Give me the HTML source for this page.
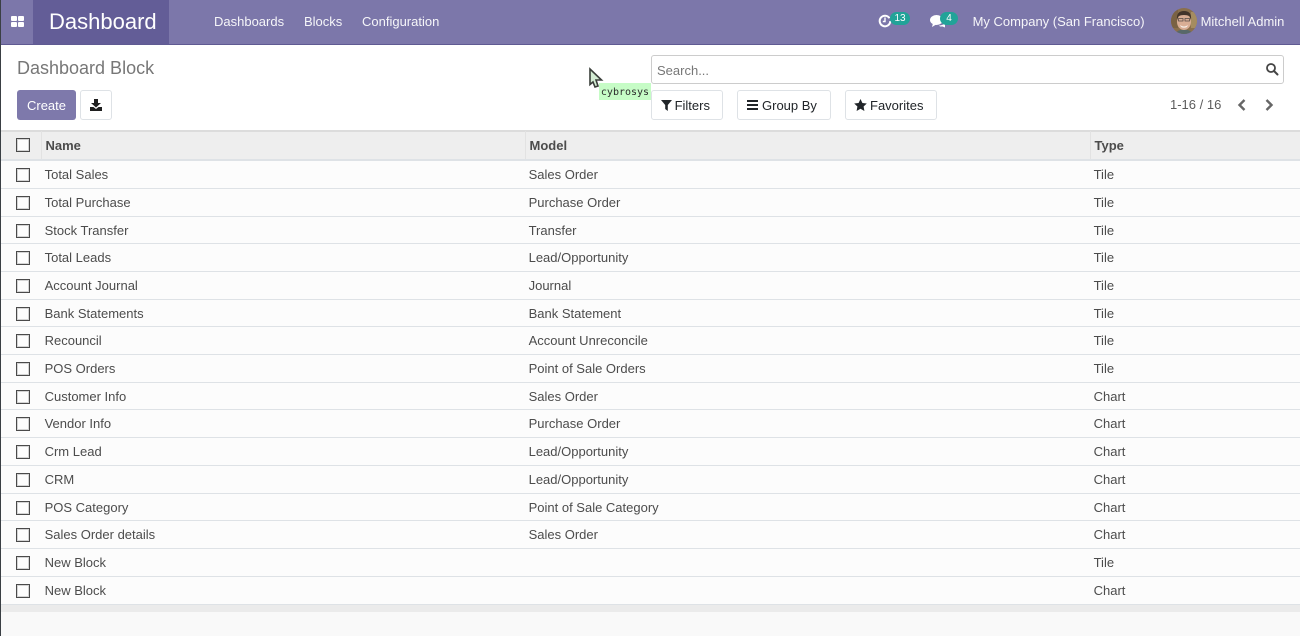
<!DOCTYPE html>
<html><head><meta charset="utf-8">
<style>
*{box-sizing:border-box}
html,body{margin:0;padding:0}
body{width:1300px;height:636px;overflow:hidden;position:relative;background:#f9f9f9;font-family:"Liberation Sans",sans-serif;font-size:13px;color:#4c4c4c}
.a{position:absolute;white-space:nowrap}
#nav{left:0;top:0;width:1300px;height:45px;background:#7c77aa;border-bottom:1px solid #5f5a92}
#brand{left:33px;top:0;width:136px;height:44px;background:#635d97}
.n{color:#fff;top:14px;line-height:15px;opacity:.93}
.btn{height:30px;top:90px;background:#fff;border:1px solid #dee2e6;border-radius:3px;color:#212529;line-height:29px}
.badge{background:#21a398;color:#fff;font-size:10px;text-align:center;border-radius:8px;height:13px;line-height:13px}
.cb{position:absolute;left:16px;width:14px;height:14px;border:1px solid #4a4a4a;background:#fdfdfd;box-shadow:inset 0 0 0 1px #d4d4d4}
.r{position:absolute;left:1px;width:1299px;height:27.7px;background:#fcfcfc;border-bottom:1px solid #dee2e6}
.r span{position:absolute;top:6px;line-height:15px}
.r span:nth-of-type(1){left:43.6px}.r span:nth-of-type(2){left:527.6px}.r span:nth-of-type(3){left:1092.6px}
.r .cb{left:15px;top:7px}
.th{position:absolute;top:138px;font-weight:bold;line-height:15px;color:#4c4c4c}
.sep{position:absolute;top:131px;width:1px;height:28px;background:#e2e2e2}
</style></head><body>
<div class="a" style="left:1px;top:45px;width:1299px;height:86px;background:#fff"></div>
<div class="a" style="left:1px;top:130px;width:1299px;height:2px;background:#dcdcdc"></div>

<div class="a" id="nav"></div>
<div class="a" id="brand"></div>
<svg class="a" style="left:11px;top:16px" width="13" height="11" viewBox="0 0 13 11"><g fill="#fff"><rect x="0" y="0" width="6" height="5" rx="1"/><rect x="7" y="0" width="6" height="5" rx="1"/><rect x="0" y="6" width="6" height="5" rx="1"/><rect x="7" y="6" width="6" height="5" rx="1"/></g></svg>
<div class="a" style="left:49px;top:9px;font-size:22px;line-height:26px;color:#fff">Dashboard</div>
<div class="a n" style="left:214px">Dashboards</div>
<div class="a n" style="left:304px">Blocks</div>
<div class="a n" style="left:362px">Configuration</div>

<svg class="a" style="left:878px;top:14px" width="14" height="14" viewBox="0 0 14 14"><path d="M11.5 4.2A5.3 5.3 0 1 0 12.3 7" fill="none" stroke="#fff" stroke-width="2"/><path d="M7 3.5V7.5H4.8" fill="none" stroke="#fff" stroke-width="1.4"/></svg>
<div class="a badge" style="left:890px;top:12px;width:20px">13</div>
<svg class="a" style="left:930px;top:14px" width="16" height="14" viewBox="0 0 16 14"><ellipse cx="6.5" cy="6" rx="6.5" ry="5" fill="#fff"/><path d="M3 9L2 13L7 10Z" fill="#fff"/><path d="M9 11.5Q12 11.5 15 9.5V11L15 13.5L12.5 12.5H10Z" fill="#fff"/></svg>
<div class="a badge" style="left:940px;top:12px;width:18px">4</div>
<div class="a n" style="left:972.6px">My Company (San Francisco)</div>
<svg class="a" style="left:1171px;top:8px" width="26" height="26" viewBox="0 0 26 26"><defs><clipPath id="c"><circle cx="13" cy="13" r="13"/></clipPath></defs><g clip-path="url(#c)"><rect width="26" height="26" fill="#8a6f4c"/><rect x="0" y="0" width="7" height="20" fill="#7a6243"/><rect x="20" y="4" width="6" height="16" fill="#a58c60"/><ellipse cx="13" cy="14" rx="7" ry="8" fill="#d9ae95"/><path d="M6 12Q5 3 13 3Q21 3 20 12L18.5 8Q13 6 7.5 8Z" fill="#42342a"/><rect x="7.5" y="10.5" width="4.5" height="2.5" fill="none" stroke="#4b4440" stroke-width=".7"/><rect x="14" y="10.5" width="4.5" height="2.5" fill="none" stroke="#4b4440" stroke-width=".7"/><path d="M9 17Q13 20 17 17L16 19Q13 20.5 10 19Z" fill="#f4ebe4"/><path d="M4 26Q7 21 13 22Q19 21 22 26Z" fill="#57686a"/></g></svg>
<div class="a n" style="left:1200.6px">Mitchell Admin</div>

<div class="a" style="left:17px;top:57px;font-size:18px;line-height:22px;color:#777">Dashboard Block</div>
<div class="a" style="left:17px;top:90px;width:59px;height:30px;background:#7c77aa;border-radius:3px;color:#fff;text-align:center;line-height:31px;opacity:.98">Create</div>
<div class="a btn" style="left:80px;width:32px"></div>
<svg class="a" style="left:90px;top:99px" width="12" height="12" viewBox="0 0 12 12"><path d="M4 0H8V4H11L6 8.5L1 4H4Z" fill="#1f1f1f"/><path d="M0 8H3.5L6 10L8.5 8H12V12H0Z" fill="#1f1f1f"/></svg>

<svg class="a" style="left:588px;top:67px" width="16" height="22" viewBox="0 0 16 22"><path d="M2 2V17.5L5 15L7 20L10 19L8 13H13.5Z" fill="#d3ecd3" stroke="#3a3f3a" stroke-width="1.6"/></svg>
<div class="a" style="left:599px;top:83px;width:52px;height:17px;background:#c6fcc6;font-family:'DejaVu Sans Mono','Liberation Mono',monospace;font-size:10px;line-height:20px;text-align:center;color:#2c2c2c">cybrosys</div>

<div class="a" style="left:651px;top:55px;width:633px;height:29px;background:#fff;border:1px solid #ccc;border-radius:3px;padding-left:5px;line-height:29px;color:#777">Search...</div>
<svg class="a" style="left:1265px;top:62px" width="14" height="14" viewBox="0 0 14 14"><circle cx="6" cy="6" r="4" fill="none" stroke="#444" stroke-width="1.8"/><path d="M9 9L12.5 12.5" stroke="#444" stroke-width="2" stroke-linecap="round"/></svg>

<div class="a btn" style="left:651px;width:72px;padding-left:22.6px">Filters</div>
<svg class="a" style="left:661px;top:100px" width="11" height="11" viewBox="0 0 11 11"><path d="M0 0H11L6.8 5V11L4.2 9V5Z" fill="#212529"/></svg>
<div class="a btn" style="left:737px;width:94px;padding-left:24px">Group By</div>
<svg class="a" style="left:747px;top:100px" width="11" height="10" viewBox="0 0 11 10"><path d="M0 0H11V2H0ZM0 4H11V6H0ZM0 8H11V10H0Z" fill="#212529"/></svg>
<div class="a btn" style="left:845px;width:92px;padding-left:24px">Favorites</div>
<svg class="a" style="left:854px;top:99px" width="13" height="12" viewBox="0 0 13 12"><path d="M6.5 0L8.4 4L12.8 4.5L9.6 7.5L10.4 12L6.5 9.8L2.6 12L3.4 7.5L.2 4.5L4.6 4Z" fill="#212529"/></svg>

<div class="a" style="left:1170px;top:97px;line-height:15px;color:#5c5c5c">1-16 / 16</div>
<svg class="a" style="left:1237px;top:99px" width="10" height="12" viewBox="0 0 10 12"><path d="M7.5 1L2.5 6L7.5 11" fill="none" stroke="#666" stroke-width="2.4"/></svg>
<svg class="a" style="left:1264px;top:99px" width="10" height="12" viewBox="0 0 10 12"><path d="M2.5 1L7.5 6L2.5 11" fill="none" stroke="#666" stroke-width="2.4"/></svg>

<!-- table header -->
<div class="a" style="left:1px;top:132px;width:1299px;height:27px;background:#eee"></div>
<div class="a" style="left:1px;top:159px;width:1299px;height:3px;background:#dee2e6"></div>
<div class="cb" style="top:138px"></div>
<div class="sep" style="left:41px"></div><div class="sep" style="left:525px"></div><div class="sep" style="left:1090px"></div>
<div class="th" style="left:45.5px">Name</div>
<div class="th" style="left:529.5px">Model</div>
<div class="th" style="left:1094.5px">Type</div>

<!-- rows -->
<div class="r" style="top:161.15px"><div class="cb"></div><span>Total Sales</span><span>Sales Order</span><span>Tile</span></div>
<div class="r" style="top:188.85px"><div class="cb"></div><span>Total Purchase</span><span>Purchase Order</span><span>Tile</span></div>
<div class="r" style="top:216.55px"><div class="cb"></div><span>Stock Transfer</span><span>Transfer</span><span>Tile</span></div>
<div class="r" style="top:244.25px"><div class="cb"></div><span>Total Leads</span><span>Lead/Opportunity</span><span>Tile</span></div>
<div class="r" style="top:271.95px"><div class="cb"></div><span>Account Journal</span><span>Journal</span><span>Tile</span></div>
<div class="r" style="top:299.65px"><div class="cb"></div><span>Bank Statements</span><span>Bank Statement</span><span>Tile</span></div>
<div class="r" style="top:327.35px"><div class="cb"></div><span>Recouncil</span><span>Account Unreconcile</span><span>Tile</span></div>
<div class="r" style="top:355.05px"><div class="cb"></div><span>POS Orders</span><span>Point of Sale Orders</span><span>Tile</span></div>
<div class="r" style="top:382.75px"><div class="cb"></div><span>Customer Info</span><span>Sales Order</span><span>Chart</span></div>
<div class="r" style="top:410.45px"><div class="cb"></div><span>Vendor Info</span><span>Purchase Order</span><span>Chart</span></div>
<div class="r" style="top:438.15px"><div class="cb"></div><span>Crm Lead</span><span>Lead/Opportunity</span><span>Chart</span></div>
<div class="r" style="top:465.85px"><div class="cb"></div><span>CRM</span><span>Lead/Opportunity</span><span>Chart</span></div>
<div class="r" style="top:493.55px"><div class="cb"></div><span>POS Category</span><span>Point of Sale Category</span><span>Chart</span></div>
<div class="r" style="top:521.25px"><div class="cb"></div><span>Sales Order details</span><span>Sales Order</span><span>Chart</span></div>
<div class="r" style="top:548.95px"><div class="cb"></div><span>New Block</span><span></span><span>Tile</span></div>
<div class="r" style="top:576.65px;height:28px"><div class="cb"></div><span>New Block</span><span></span><span>Chart</span></div>

<div class="a" style="left:1px;top:605px;width:1299px;height:7px;background:#ebebeb"></div>
<div class="a" style="left:0;top:0;width:1px;height:636px;background:#3a3f44"></div>
</body></html>
